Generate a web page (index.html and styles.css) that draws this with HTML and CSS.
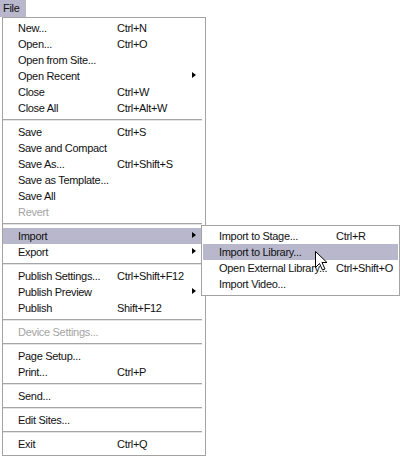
FILE: index.html
```html
<!DOCTYPE html>
<html>
<head>
<meta charset="utf-8">
<link rel="stylesheet" href="styles.css">
</head>
<body>
<div class="menubar"><span class="menubar-item">File</span></div>
<div class="menu">
  <div class="item"><span class="label">New...</span><span class="key">Ctrl+N</span></div>
  <div class="item"><span class="label">Open...</span><span class="key">Ctrl+O</span></div>
  <div class="item"><span class="label">Open from Site...</span></div>
  <div class="item has-sub"><span class="label">Open Recent</span><span class="arrow"></span></div>
  <div class="item"><span class="label">Close</span><span class="key">Ctrl+W</span></div>
  <div class="item"><span class="label">Close All</span><span class="key">Ctrl+Alt+W</span></div>
  <div class="sep"></div>
  <div class="item"><span class="label">Save</span><span class="key">Ctrl+S</span></div>
  <div class="item"><span class="label">Save and Compact</span></div>
  <div class="item"><span class="label">Save As...</span><span class="key">Ctrl+Shift+S</span></div>
  <div class="item"><span class="label">Save as Template...</span></div>
  <div class="item"><span class="label">Save All</span></div>
  <div class="item disabled"><span class="label">Revert</span></div>
  <div class="sep"></div>
  <div class="item has-sub active open"><span class="label">Import</span><span class="arrow"></span>
    <div class="submenu">
      <div class="item"><span class="label">Import to Stage...</span><span class="key">Ctrl+R</span></div>
      <div class="item active"><span class="label">Import to Library...</span></div>
      <div class="item"><span class="label">Open External Library...</span><span class="key">Ctrl+Shift+O</span></div>
      <div class="item"><span class="label">Import Video...</span></div>
    </div>
  </div>
  <div class="item has-sub"><span class="label">Export</span><span class="arrow"></span></div>
  <div class="sep"></div>
  <div class="item"><span class="label">Publish Settings...</span><span class="key">Ctrl+Shift+F12</span></div>
  <div class="item has-sub"><span class="label">Publish Preview</span><span class="arrow"></span></div>
  <div class="item"><span class="label">Publish</span><span class="key">Shift+F12</span></div>
  <div class="sep"></div>
  <div class="item disabled"><span class="label">Device Settings...</span></div>
  <div class="sep"></div>
  <div class="item"><span class="label">Page Setup...</span></div>
  <div class="item"><span class="label">Print...</span><span class="key">Ctrl+P</span></div>
  <div class="sep"></div>
  <div class="item"><span class="label">Send...</span></div>
  <div class="sep"></div>
  <div class="item"><span class="label">Edit Sites...</span></div>
  <div class="sep"></div>
  <div class="item"><span class="label">Exit</span><span class="key">Ctrl+Q</span></div>
</div>
<svg class="cursor" width="13" height="20" viewBox="0 0 13 20"><path d="M0.5 0.5 L0.5 16.5 L4.5 12.5 L7.5 19 L10 18 L7 11.5 L12 11.5 Z" fill="#fff" stroke="#000" stroke-width="1" stroke-linejoin="miter"/></svg>
</body>
</html>
```

FILE: styles.css
```css
html, body {
  margin: 0;
  padding: 0;
  background: #ffffff;
}
body {
  position: relative;
  width: 400px;
  height: 457px;
  overflow: hidden;
  font-family: "Liberation Sans", Arial, sans-serif;
  font-size: 11px;
  letter-spacing: -0.3px;
  color: #111;
}
.menubar {
  height: 17px;
  display: flex;
}
.menubar-item {
  display: flex;
  align-items: center;
  padding: 0 6px 0 3px;
  background: #b9b7cc;
  line-height: 17px;
}
.menu {
  margin-left: 2px;
  width: 204px;
  box-sizing: border-box;
  border: 1px solid #a3a3a3;
  padding: 2px 0 3px 0;
  background: #fff;
}
.item {
  position: relative;
  display: flex;
  align-items: center;
  height: 16px;
  padding-left: 15px;
}
.menu > .item {
  margin: 0 1px 0 0;
}
.label {
  width: 99px;
  white-space: nowrap;
  flex: none;
}
.key {
  white-space: nowrap;
}
.arrow {
  position: absolute;
  right: 8px;
  top: 4px;
  width: 0;
  height: 0;
  border-top: 3.5px solid transparent;
  border-bottom: 3.5px solid transparent;
  border-left: 4px solid #000;
}
.item.active {
  background: #b8b7cb;
}
.disabled {
  color: #a4a4a4;
}
.sep {
  height: 0;
  margin: 3px 3px 3px 0;
  border-top: 1px solid #a6a6a6;
  border-bottom: 1px solid #e4e4e4;
}
.submenu {
  position: absolute;
  top: -3px;
  left: 198px;
  width: 199px;
  box-sizing: border-box;
  border: 1px solid #a3a3a3;
  padding: 2px 1px 3px 1px;
  background: #fff;
}
.submenu .item {
  padding-left: 16px;
}
.submenu .label {
  width: 117px;
}
.cursor {
  position: absolute;
  left: 315px;
  top: 251px;
}
```
